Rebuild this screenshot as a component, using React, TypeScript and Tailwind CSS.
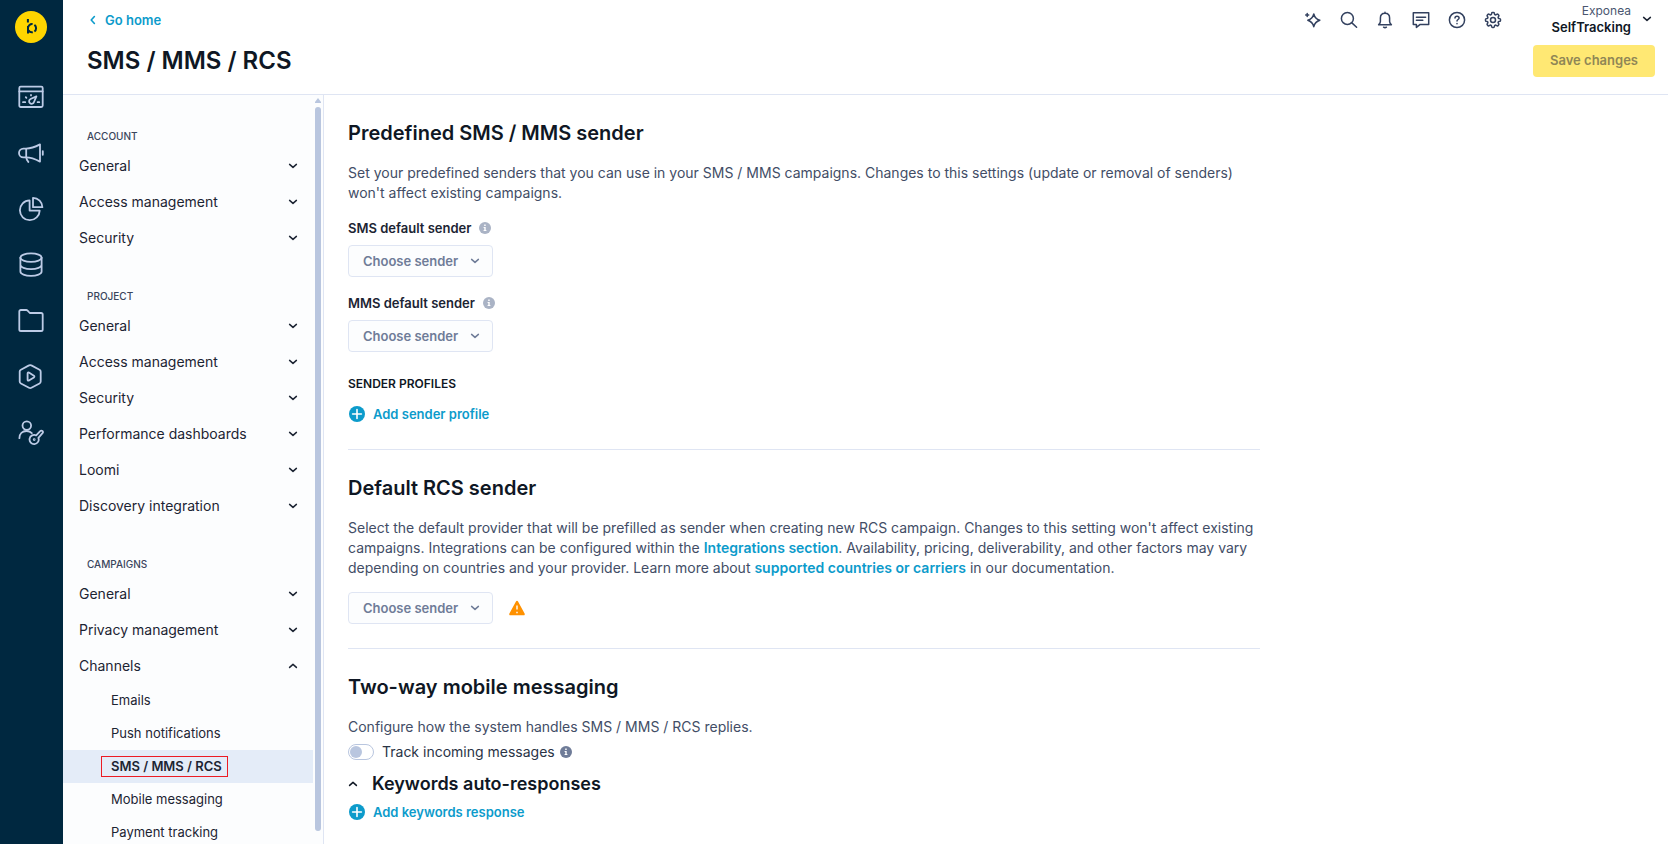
import React, { useState } from "react";
import { HiOutlineCog8Tooth } from "react-icons/hi2";

interface NavGroup {
  title: string;
  items: { label: string; children?: string[] }[];
}

const NAV_GROUPS: NavGroup[] = [
  {
    title: "Account",
    items: [{ label: "General" }, { label: "Access management" }, { label: "Security" }],
  },
  {
    title: "Project",
    items: [
      { label: "General" },
      { label: "Access management" },
      { label: "Security" },
      { label: "Performance dashboards" },
      { label: "Loomi" },
      { label: "Discovery integration" },
    ],
  },
  {
    title: "Campaigns",
    items: [
      { label: "General" },
      { label: "Privacy management" },
      {
        label: "Channels",
        children: [
          "Emails",
          "Push notifications",
          "SMS / MMS / RCS",
          "Mobile messaging",
          "Payment tracking",
        ],
      },
    ],
  },
];

const ACTIVE_PAGE = "SMS / MMS / RCS";

const Chevron = ({ up = false, className = "" }: { up?: boolean; className?: string }) => (
  <svg
    viewBox="0 0 10 10"
    className={`h-[10px] w-[10px] shrink-0 ${className}`}
    fill="none"
    stroke="currentColor"
    strokeWidth="1.5"
    strokeLinecap="round"
    strokeLinejoin="round"
    aria-hidden="true"
  >
    <path d={up ? "M1.6 6.400 5 3.400l3.400 3" : "M1.6 3.400 5 6.400l3.400-3"} />
  </svg>
);

const RailIcon = ({ children }: { children: React.ReactNode }) => (
  <svg
    viewBox="0 0 26 26"
    className="h-[26px] w-[26px]"
    fill="none"
    stroke="currentColor"
    strokeWidth="1.8"
    strokeLinecap="round"
    strokeLinejoin="round"
    aria-hidden="true"
  >
    {children}
  </svg>
);

const RAIL_ITEMS = [
  {
    label: "Dashboards",
    icon: (
      <RailIcon>
        <rect x="1.300" y="2.600" width="23.400" height="20.400" rx="1.400" />
        <path d="M1.300 7.400h23.400M5 18.200h2.200M19.600 18.200h1.600M7.800 13.200l.6.600M13 11v.4" />
        <path d="M18.400 12.400 12.600 15a2.500 2.500 0 1 0 3.400 3z" />
      </RailIcon>
    ),
  },
  {
    label: "Campaigns",
    icon: (
      <RailIcon>
        <path d="M5.400 8.600H8c5 0 9.500-1.800 14-4.200v17.200c-4.500-2.400-9-4.200-14-4.200H5.400a4.400 4.400 0 0 1 0-8.800z" />
        <path d="M8.200 8.800v8.400c.2 2.200.8 3.600 2.200 4.800M24.800 11.200v3.600" />
      </RailIcon>
    ),
  },
  {
    label: "Analytics",
    icon: (
      <RailIcon>
        <path d="M11.600 4.400A9.900 9.900 0 1 0 21.700 14.600H11.600z" />
        <path d="M15 1.800v9.400h9.400A9.500 9.500 0 0 0 15 1.800z" />
      </RailIcon>
    ),
  },
  {
    label: "Data",
    icon: (
      <RailIcon>
        <ellipse cx="13" cy="5.600" rx="10.600" ry="4.300" />
        <path d="M2.400 5.600v14c0 2.400 4.700 4.300 10.600 4.300s10.600-1.900 10.600-4.300v-14M2.400 12.800c0 2.400 4.700 4.300 10.600 4.300s10.600-1.900 10.600-4.300" />
      </RailIcon>
    ),
  },
  {
    label: "Assets",
    icon: (
      <RailIcon>
        <path d="M1.300 21.400V3.600A1.600 1.600 0 0 1 2.900 2h5.300c.6 0 1 .2 1.400.7L11.800 5h11.300a1.600 1.600 0 0 1 1.600 1.600v14.800a1.600 1.600 0 0 1-1.600 1.600H2.900a1.600 1.600 0 0 1-1.600-1.600z" />
      </RailIcon>
    ),
  },
  {
    label: "Experiences",
    icon: (
      <RailIcon>
        <path d="M11 1.400a2.400 2.400 0 0 1 2.400 0l8.100 4.300a2.200 2.200 0 0 1 1.200 2v9.800a2.200 2.200 0 0 1-1.200 2l-8.100 4.300a2.400 2.400 0 0 1-2.400 0l-8.100-4.300a2.200 2.200 0 0 1-1.200-2V7.700a2.200 2.200 0 0 1 1.200-2z" />
        <path d="M9.600 9.400v6.400c0 .8.600 1.100 1.300.8l5-3.200c.7-.5.7-1.100 0-1.600l-5-3.200c-.7-.3-1.300 0-1.300.8z" />
      </RailIcon>
    ),
  },
  {
    label: "User access",
    icon: (
      <RailIcon>
        <circle cx="8.800" cy="5.600" r="4.300" />
        <path d="M1.400 18.200c0-4.400 3-7.200 7.200-7.200 2.200 0 4 .8 5.200 2.200" />
        <path d="m18.200 15.400 4-4.200a1.500 1.500 0 0 1 2.300 2l-4.100 4.600a4.600 4.600 0 1 1-2.200-2.400z" />
        <circle cx="16.200" cy="19.600" r=".5" />
      </RailIcon>
    ),
  },
];

const TopIcon = ({ children }: { children: React.ReactNode }) => (
  <svg
    viewBox="0 0 20 20"
    className="h-5 w-5"
    fill="none"
    stroke="currentColor"
    strokeWidth="1.500"
    strokeLinecap="round"
    strokeLinejoin="round"
    aria-hidden="true"
  >
    {children}
  </svg>
);

const TOP_ACTIONS = [
  {
    label: "Assistant",
    icon: (
      <TopIcon>
        <path d="M10.800 4c.8 3.400 2.400 5.200 6 6.300-3.600 1.200-5.200 3-6 6.400-.9-3.400-2.500-5.200-6-6.400 3.500-1.100 5.100-2.900 6-6.300z" />
        <path d="M4.200 3.400v3M2.700 4.900h3" />
      </TopIcon>
    ),
  },
  {
    label: "Search",
    icon: (
      <TopIcon>
        <circle cx="8.400" cy="8.400" r="6" />
        <path d="m12.900 12.900 4.700 4.400" />
      </TopIcon>
    ),
  },
  {
    label: "Notifications",
    icon: (
      <TopIcon>
        <path d="M10 3.200c-2.800 0-4.600 2-4.600 4.800v3.400c0 1.400-.6 2.200-1.800 3.400h12.800c-1.200-1.200-1.800-2-1.800-3.400V8c0-2.800-1.800-4.800-4.600-4.800zM10 2.300v.8M8.600 17.200c.8.600 2 .6 2.800 0" />
      </TopIcon>
    ),
  },
  {
    label: "Feedback",
    icon: (
      <TopIcon>
        <path d="M2.300 2.800h15.400v11.600H9.200l-3.800 3v-3H2.300zM5.400 7.200h9.200M5.400 10.200h6.400" />
      </TopIcon>
    ),
  },
  {
    label: "Help",
    icon: (
      <TopIcon>
        <circle cx="10" cy="10" r="7.600" />
        <path d="M8 8.100c0-1.200.9-1.900 2-1.900s2.100.7 2.100 1.800c0 1.500-2.100 1.500-2.100 3.100M10 13.500v.2" />
      </TopIcon>
    ),
  },
  { label: "Settings", icon: <HiOutlineCog8Tooth className="h-5 w-5" strokeWidth="1.8" /> },
];

const InfoIcon = ({ className }: { className: string }) => (
  <svg viewBox="0 0 12 12" className={`h-3 w-3 shrink-0 ${className}`} aria-hidden="true">
    <circle cx="6" cy="6" r="6" fill="currentColor" />
    <path d="M5.200 2.500h1.500v1.400H5.200zM4.600 5h2.100v3h.7v1H4.600V8h.7V6h-.7z" fill="#fff" />
  </svg>
);

const AddButton = ({ children }: { children: React.ReactNode }) => (
  <button
    type="button"
    className="flex items-center gap-2 px-px text-[13px] leading-5 font-semibold text-[#0c9bcb]"
  >
    <svg viewBox="0 0 16 16" className="h-4 w-4" aria-hidden="true">
      <circle cx="8" cy="8" r="8" fill="currentColor" />
      <path d="M8 3.600v8.800M3.600 8h8.800" stroke="#fff" strokeWidth="1.600" strokeLinecap="round" />
    </svg>
    {children}
  </button>
);

const SenderSelect = ({ id, label }: { id: string; label?: string }) => (
  <div className="grid w-[145px] items-center text-[#6f7c98]">
    <select
      id={id}
      aria-label={label}
      className="col-start-1 row-start-1 h-8 appearance-none rounded-[4px] border border-[#dfe5f3] bg-[#fcfdfe] pl-[14px] text-[13px] font-semibold"
    >
      <option>Choose sender</option>
    </select>
    <Chevron className="pointer-events-none col-start-1 row-start-1 mr-[13px] justify-self-end" />
  </div>
);

const SenderField = ({ id, label }: { id: string; label: string }) => (
  <div>
    <div className="mb-[7px] flex items-center gap-2">
      <label htmlFor={id} className="text-[13px] leading-5 font-semibold text-[#1c2433]">
        {label}
      </label>
      <InfoIcon className="text-[#aab3c5]" />
    </div>
    <SenderSelect id={id} />
  </div>
);

const SectionTitle = ({ children }: { children: React.ReactNode }) => (
  <h2 className="text-xl leading-7 font-semibold text-[#0f1724]">{children}</h2>
);

const DocLink = ({ children }: { children: React.ReactNode }) => (
  <a href="#" className="font-semibold text-[#0c9bcb]">
    {children}
  </a>
);

const Rail = () => (
  <nav
    aria-label="Main"
    className="flex w-[63px] shrink-0 flex-col items-center bg-[#002840] pt-[11px] pr-0.5"
  >
    <a href="#" aria-label="Home">
      <svg viewBox="0 0 32 32" className="h-8 w-8" aria-hidden="true">
        <circle cx="16" cy="16" r="16" fill="#ffd500" />
        <g fill="none" stroke="#002840" strokeWidth="2">
          <path d="M12.900 8v3.400M13 15v7.400" />
          <path d="M13 17.400a4.100 4.100 0 0 1 4.600-4.300M19.400 13.900a4.100 4.100 0 0 1 0 6.600M17.800 21.200a4.100 4.100 0 0 1-4.300-2" />
        </g>
      </svg>
    </a>
    <ul className="mt-[41px] flex flex-col gap-[30px] text-[#bccbe6]">
      {RAIL_ITEMS.map((item) => (
        <li key={item.label}>
          <a href="#" aria-label={item.label} className="block">
            {item.icon}
          </a>
        </li>
      ))}
    </ul>
  </nav>
);

const Header = () => (
  <header className="flex shrink-0 justify-between border-b border-[#dfe5f3] pr-[13px] pl-6">
    <div className="pt-[10px] pb-4">
      <a href="#" className="flex items-center gap-2 text-[13px] leading-5 font-semibold text-[#0c9bcb]">
        <svg
          viewBox="0 0 10 10"
          className="h-[10px] w-[10px]"
          fill="none"
          stroke="currentColor"
          strokeWidth="1.600"
          strokeLinecap="round"
          strokeLinejoin="round"
          aria-hidden="true"
        >
          <path d="M7.400 1.500 4.200 5l3.200 3.500" />
        </svg>
        Go home
      </a>
      <h1 className="mt-[14px] text-2xl leading-[34px] font-semibold text-[#0f1724]">SMS / MMS / RCS</h1>
    </div>
    <div className="flex flex-col items-end pt-[3px]">
      <div className="flex items-center">
        <div className="flex gap-4 pt-0.5 pr-[49px] text-[#33415f]">
          {TOP_ACTIONS.map((action) => (
            <button key={action.label} type="button" aria-label={action.label}>
              {action.icon}
            </button>
          ))}
        </div>
        <button type="button" className="flex items-center gap-[11px] pr-[3px] text-right leading-4">
          <span>
            <span className="block text-xs leading-4 text-[#4a5670]">Exponea</span>
            <span className="block text-[13px] leading-4 font-semibold text-[#0f1724]">SelfTracking</span>
          </span>
          <Chevron className="text-[#1c2433]" />
        </button>
      </div>
      <button
        type="button"
        className="mt-[10px] h-8 rounded-[4px] bg-[#ffe873] px-[17px] text-[13px] font-semibold text-[#8f8656]"
      >
        Save changes
      </button>
    </div>
  </header>
);

const Sidebar = () => (
  <aside className="flex w-[261px] shrink-0 border-r border-[#dfe5f3] bg-[#fcfdfe]">
    <nav aria-label="Settings" className="min-w-0 flex-1 overflow-y-auto pt-px [scrollbar-width:none]">
      {NAV_GROUPS.map((group) => (
        <section key={group.title} className="pt-[33px]">
          <h2 className="mb-1 pl-6 text-[10px] leading-[15px] font-medium text-[#3a455c] uppercase">
            {group.title}
          </h2>
          {group.items.map((item) => (
            <div key={item.label}>
              <button
                type="button"
                aria-expanded={Boolean(item.children)}
                className="flex h-9 w-full items-center justify-between pr-[15px] pl-4 text-sm text-[#1c2433]"
              >
                {item.label}
                <Chevron up={Boolean(item.children)} />
              </button>
              {item.children?.map((child) => (
                <a
                  key={child}
                  href="#"
                  className={`flex h-[33px] items-center pl-[38px] text-[13px] leading-[19px] text-[#1c2433] ${
                    child === ACTIVE_PAGE ? "bg-[#e4ecf8] font-semibold" : ""
                  }`}
                >
                  <span
                    className={`border pr-[5px] pl-[9px] ${
                      child === ACTIVE_PAGE ? "border-[#ec1c24]" : "border-transparent"
                    }`}
                  >
                    {child}
                  </span>
                </a>
              ))}
            </div>
          ))}
        </section>
      ))}
    </nav>
    <div className="flex w-[10px] shrink-0 flex-col pt-[3px] pr-0.5 pb-[13px] pl-0.5">
      <svg viewBox="0 0 6 5" className="mb-1 h-[5px] w-[6px]" aria-hidden="true">
        <path d="M3 0 6 4v1H0V4z" fill="#b9c6df" />
      </svg>
      <div className="w-[6px] flex-1 rounded-full bg-[#b9c6df]" />
    </div>
  </aside>
);

const App: React.FC = () => {
  const [trackIncoming, setTrackIncoming] = useState(false);

  return (
    <div className="flex h-screen overflow-hidden bg-white font-['Inter','Liberation_Sans',sans-serif]">
      <Rail />
      <div className="flex min-w-0 flex-1 flex-col">
        <Header />
        <div className="flex min-h-0 flex-1">
          <Sidebar />
          <main className="min-w-0 flex-1 overflow-y-auto px-6 [scrollbar-width:none]">
            <div className="max-w-[912px] text-sm leading-5 text-[#424d66]">
              <section className="border-b border-[#dfe5f3] pt-6 pb-[25px]">
                <SectionTitle>Predefined SMS / MMS sender</SectionTitle>
                <p className="mt-4">
                  Set your predefined senders that you can use in your SMS / MMS campaigns. Changes to this
                  settings (update or removal of senders) won't affect existing campaigns.
                </p>
                <div className="mt-[15px] flex flex-col gap-4">
                  <SenderField id="sms-sender" label="SMS default sender" />
                  <SenderField id="mms-sender" label="MMS default sender" />
                </div>
                <h3 className="mt-[22px] mb-[10px] text-xs leading-5 font-semibold text-[#0f1724] uppercase">
                  Sender profiles
                </h3>
                <AddButton>Add sender profile</AddButton>
              </section>

              <section className="border-b border-[#dfe5f3] py-6">
                <SectionTitle>Default RCS sender</SectionTitle>
                <p className="mt-4">
                  Select the default provider that will be prefilled as sender when creating new RCS campaign.
                  Changes to this setting won't affect existing campaigns. Integrations can be configured
                  within the <DocLink>Integrations section</DocLink>. Availability, pricing, deliverability, and
                  other factors may vary depending on countries and your provider. Learn more about{" "}
                  <DocLink>supported countries or carriers</DocLink> in our documentation.
                </p>
                <div className="mt-[14px] flex items-center gap-4">
                  <SenderSelect id="rcs-sender" label="Default RCS sender" />
                  <svg viewBox="0 0 16 16" className="h-4 w-4" aria-hidden="true">
                    <path
                      d="M7.100 1.200a1 1 0 0 1 1.800 0l6.700 12.400a1 1 0 0 1-.9 1.600H1.300a1 1 0 0 1-.9-1.600z"
                      fill="#ff9100"
                    />
                    <path d="M8 5.400v4.200M8 11.800v1.400" stroke="#fff" strokeWidth="1.400" />
                  </svg>
                </div>
              </section>

              <section className="pt-6 pb-5">
                <SectionTitle>Two-way mobile messaging</SectionTitle>
                <p className="mt-4">Configure how the system handles SMS / MMS / RCS replies.</p>
                <div className="mt-[5px] flex items-center gap-[5px]">
                  <label className="flex items-center gap-2 text-[#2a3446]">
                    <input
                      type="checkbox"
                      role="switch"
                      checked={trackIncoming}
                      onChange={(e) => setTrackIncoming(e.target.checked)}
                      className="flex h-4 w-[26px] appearance-none items-center rounded-full border border-[#b9c6df] bg-white px-px before:h-3 before:w-3 before:rounded-full before:bg-[#b9c6df] checked:justify-end checked:before:bg-[#0c9bcb]"
                    />
                    Track incoming messages
                  </label>
                  <InfoIcon className="text-[#6f7c98]" />
                </div>
                <h3 className="mt-[10px] mb-1.5 text-lg leading-6 font-semibold text-[#0f1724]">
                  <button type="button" aria-expanded="true" className="flex items-center gap-[14px]">
                    <Chevron up />
                    Keywords auto-responses
                  </button>
                </h3>
                <AddButton>Add keywords response</AddButton>
              </section>
            </div>
          </main>
        </div>
      </div>
    </div>
  );
};

export default App;
